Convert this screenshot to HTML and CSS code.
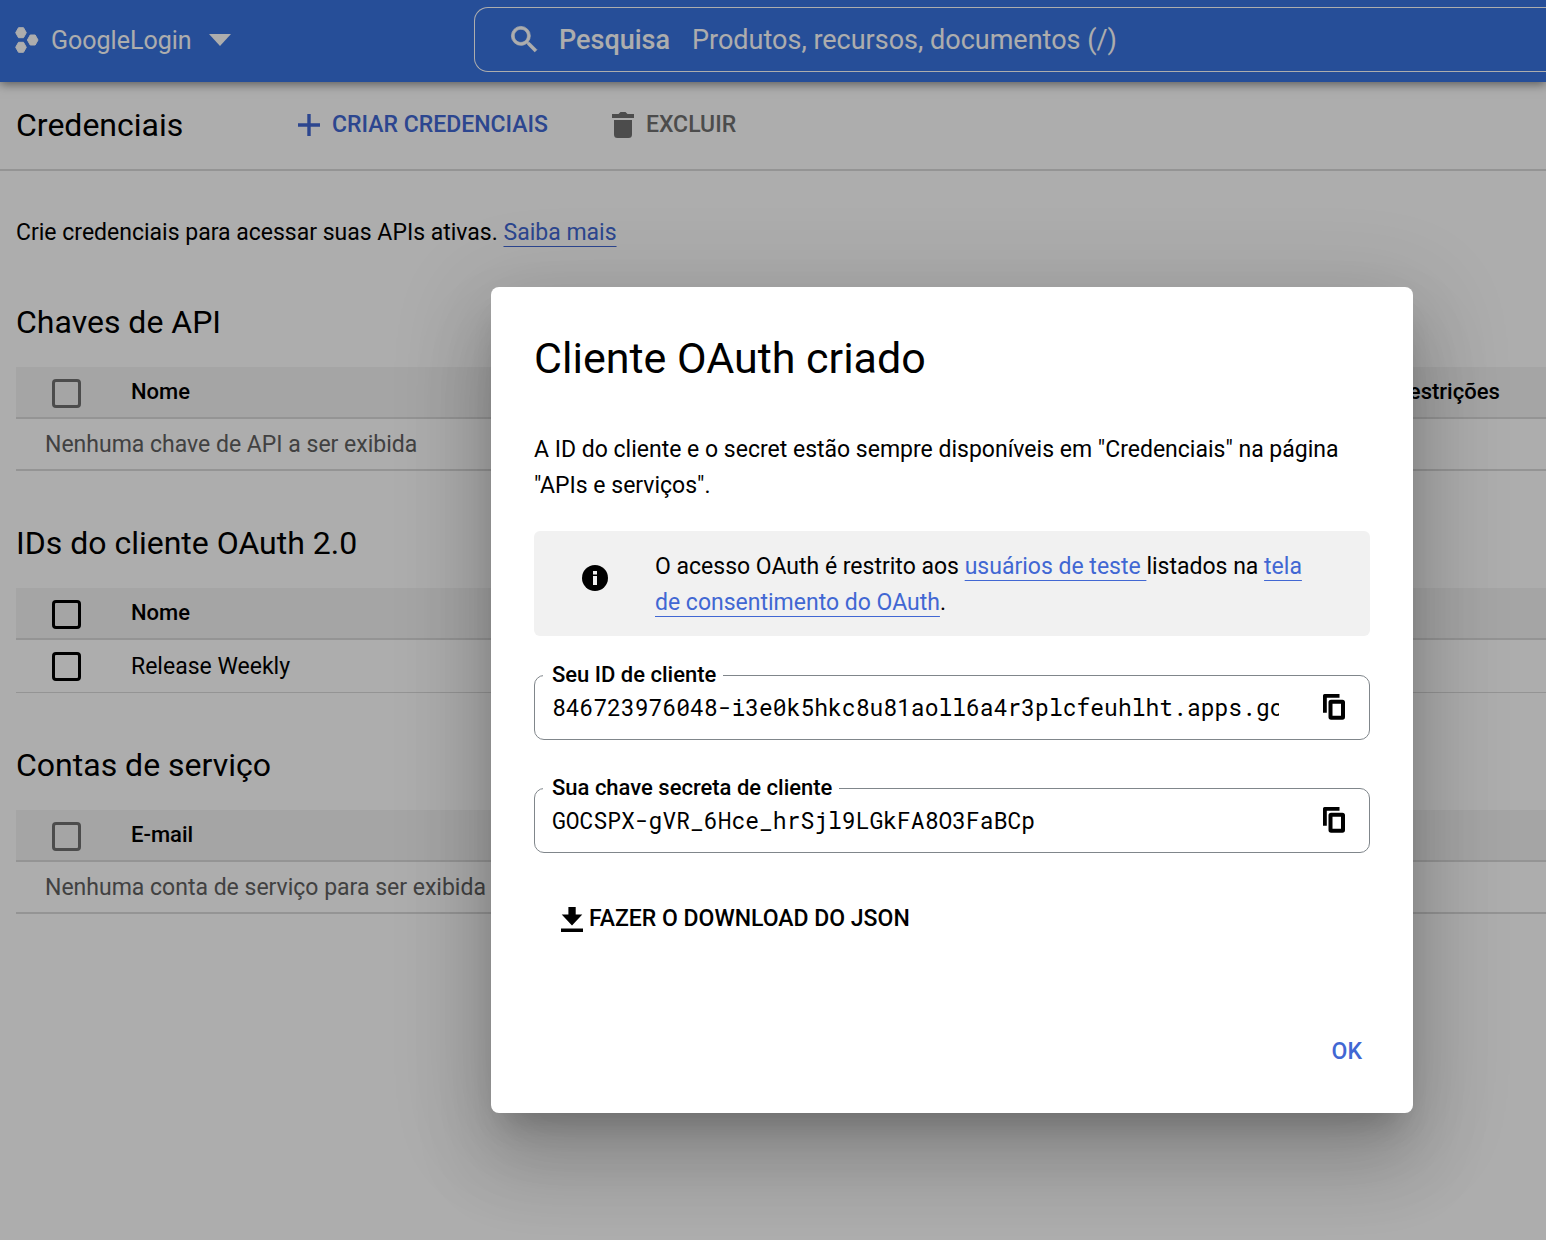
FILE: index.html
```html
<!DOCTYPE html>
<html lang="pt-BR">
<head>
<meta charset="utf-8">
<meta name="viewport" content="width=device-width, initial-scale=1">
<title>Credenciais</title>
<link rel="stylesheet" href="styles.css">
</head>
<body>
<header class="topbar">
  <button class="project" type="button">
    <svg width="24" height="26" viewBox="0 0 24 26" fill="currentColor" stroke="currentColor" stroke-linejoin="round" aria-hidden="true">
      <path d="M3.500 .7h5l2.800 5-2.800 5h-5L.7 5.700zM3.500 15.300h5l2.800 5-2.800 5h-5l-2.800-5zM15.200 8h5l2.800 5-2.800 5h-5l-2.800-5z"/>
    </svg>
    <span class="project-name">GoogleLogin</span>
    <svg width="22" height="12" viewBox="0 0 22 12" fill="currentColor" aria-hidden="true"><path d="M0 0h22L11 12z"/></svg>
  </button>
  <div class="search">
    <svg width="35" height="35" viewBox="0 0 24 24" fill="currentColor" stroke="currentColor" stroke-width=".5" aria-hidden="true">
      <path d="M15.500 14h-.79l-.28-.27A6.470 6.470 0 0 0 16 9.500 6.500 6.500 0 1 0 9.500 16c1.610 0 3.090-.59 4.230-1.570l.27.28v.79l5 4.990L20.490 19l-4.990-5zm-6 0C7.010 14 5 11.990 5 9.500S7.010 5 9.500 5 14 7.010 14 9.500 11.990 14 9.500 14z"/>
    </svg>
    <label class="search-label" for="search">Pesquisa</label>
    <input class="search-input" id="search" type="text" placeholder="Produtos, recursos, documentos (/)">
  </div>
</header>

<div class="toolbar">
  <h1 class="toolbar-title">Credenciais</h1>
  <button class="action action-primary" type="button">
    <svg width="24" height="24" viewBox="0 0 24 24" fill="currentColor" aria-hidden="true"><path d="M10.300 1h3.400v9.300H23v3.400h-9.300V23h-3.400v-9.300H1v-3.400h9.300z"/></svg>
    Criar credenciais
  </button>
  <button class="action action-muted" type="button">
    <svg width="24" height="26" viewBox="0 0 24 26" fill="currentColor" aria-hidden="true"><path d="M1 2h6.500l2-2h5l2 2H23v4H1zM3 8h18v14.500a3.500 3.500 0 0 1-3.500 3.500h-11A3.500 3.500 0 0 1 3 22.500z"/></svg>
    Excluir
  </button>
</div>

<main class="content">
  <p class="intro">Crie credenciais para acessar suas APIs ativas. <a class="link" href="#saiba-mais">Saiba mais</a></p>

  <section class="section">
    <h2 class="section-title">Chaves de API</h2>
    <table class="grid">
      <thead>
        <tr>
          <th class="col-check"><input class="check check-disabled" type="checkbox" aria-label="Selecionar todas as chaves" disabled></th>
          <th>Nome</th>
          <th class="col-restrictions">Restrições</th>
        </tr>
      </thead>
      <tbody>
        <tr><td class="empty" colspan="3">Nenhuma chave de API a ser exibida</td></tr>
      </tbody>
    </table>
  </section>

  <section class="section">
    <h2 class="section-title">IDs do cliente OAuth 2.0</h2>
    <table class="grid">
      <thead>
        <tr>
          <th class="col-check"><input class="check" type="checkbox" aria-label="Selecionar todos os IDs"></th>
          <th>Nome</th>
        </tr>
      </thead>
      <tbody>
        <tr class="row-data">
          <td class="col-check"><input class="check" type="checkbox" aria-label="Selecionar Release Weekly"></td>
          <td>Release Weekly</td>
        </tr>
      </tbody>
    </table>
  </section>

  <section class="section">
    <h2 class="section-title">Contas de serviço</h2>
    <table class="grid">
      <thead>
        <tr>
          <th class="col-check"><input class="check check-disabled" type="checkbox" aria-label="Selecionar todas as contas" disabled></th>
          <th>E-mail</th>
        </tr>
      </thead>
      <tbody>
        <tr><td class="empty" colspan="2">Nenhuma conta de serviço para ser exibida</td></tr>
      </tbody>
    </table>
  </section>
</main>

<div class="overlay">
  <div class="dialog" role="dialog" aria-modal="true" aria-labelledby="dialog-title">
    <h2 class="dialog-title" id="dialog-title">Cliente OAuth criado</h2>
    <p class="dialog-text">A ID do cliente e o secret estão sempre disponíveis em "Credenciais" na página "APIs e serviços".</p>
    <div class="notice">
      <svg class="notice-icon" width="26" height="26" viewBox="0 0 26 26" aria-hidden="true"><circle cx="13" cy="13" r="13"/><path fill="#f1f1f1" d="M11 6h4v3.400h-4zM11 11h4v9h-4z"/></svg>
      <p class="notice-text">O acesso OAuth é restrito aos <a class="link" href="#usuarios">usuários de teste </a>listados na <a class="link" href="#tela">tela de consentimento do OAuth</a>.</p>
    </div>
    <fieldset class="field">
      <legend class="field-legend"><label for="client-id">Seu ID de cliente</label></legend>
      <div class="field-row">
        <input class="field-input" id="client-id" type="text" readonly value="846723976048-i3e0k5hkc8u81aoll6a4r3plcfeuhlht.apps.googleusercontent.com">
        <button class="copy" type="button" aria-label="Copiar ID">
          <svg width="22" height="26" viewBox="0 0 22 26" aria-hidden="true"><path d="M0 1.500A1.500 1.500 0 0 1 1.500 0H16.500v3.800H3.800v15H0z"/><rect x="7.500" y="7.700" width="12.500" height="16" rx=".6" fill="none" stroke="#000" stroke-width="4"/></svg>
        </button>
      </div>
    </fieldset>
    <fieldset class="field">
      <legend class="field-legend"><label for="client-secret">Sua chave secreta de cliente</label></legend>
      <div class="field-row">
        <input class="field-input" id="client-secret" type="text" readonly value="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">
        <button class="copy" type="button" aria-label="Copiar chave secreta">
          <svg width="22" height="26" viewBox="0 0 22 26" aria-hidden="true"><path d="M0 1.500A1.500 1.500 0 0 1 1.500 0H16.500v3.800H3.800v15H0z"/><rect x="7.500" y="7.700" width="12.500" height="16" rx=".6" fill="none" stroke="#000" stroke-width="4"/></svg>
        </button>
      </div>
    </fieldset>
    <button class="download" type="button">
      <svg width="22" height="25" viewBox="0 0 22 25" fill="currentColor" aria-hidden="true"><path d="M7.400 0h7.300v7.500h6.600L11 18.500.7 7.500h6.700zM0 21.500h22V25H0z"/></svg>
      Fazer o download do JSON
    </button>
    <div class="dialog-actions"><button class="ok" type="button">OK</button></div>
  </div>
</div>
</body>
</html>
```
FILE: styles.css
```css
* {
  box-sizing: border-box;
}

body {
  margin: 0;
  min-height: 100vh;
  background: #fff;
  color: #000;
  font: 400 23px/36px Roboto, sans-serif;
  overflow-x: hidden;
}

h1,
h2,
p {
  margin: 0;
  font-weight: 400;
}

button,
input {
  margin: 0;
  padding: 0;
  border: 0;
  background: none;
  color: inherit;
  font: inherit;
}

svg {
  flex: none;
  display: block;
}

.link {
  color: #4167d3;
  text-decoration: underline;
  text-decoration-thickness: 1px;
  text-underline-offset: 6px;
  text-decoration-skip-ink: none;
}

/* Top bar */
.topbar {
  position: relative;
  display: flex;
  align-items: center;
  height: 82px;
  padding: 0 0 3px 15px;
  background: #3873e1;
  color: #fff;
  box-shadow: 0 2px 10px rgba(0, 0, 0, 0.5);
}

.project {
  display: flex;
  flex: 0 0 459px;
  align-items: center;
  font-size: 25px;
}

.project-name {
  margin: 3px 17px 0 12px;
}

.search {
  display: flex;
  flex: 1;
  align-items: center;
  height: 65px;
  padding-left: 32px;
  border: 1px solid #fff;
  border-right: 0;
  border-radius: 14px 0 0 14px;
  font-size: 27px;
}

.search-label {
  margin: 0 22px 0 17px;
  font-weight: 500;
}

.search-input {
  flex: 1;
  min-width: 0;
}

.search-input::placeholder {
  color: inherit;
  opacity: 1;
}

/* Toolbar */
.toolbar {
  display: flex;
  align-items: center;
  height: 89px;
  padding: 0 16px 1px;
  border-bottom: 2px solid #dadada;
}

.toolbar-title {
  flex: 0 0 281px;
  font-size: 32px;
}

.action {
  display: flex;
  align-items: center;
  gap: 11px;
  margin-right: 63px;
  font-weight: 500;
  text-transform: uppercase;
}

.action-primary {
  color: #4167d3;
}

.action-muted {
  color: #717171;
}

/* Credentials lists */
.content {
  padding: 44px 0 0 16px;
}

.section {
  margin-top: 49px;
}

.section + .section {
  margin-top: 50px;
}

.section-title {
  margin-bottom: 23px;
  font-size: 32px;
  line-height: 44px;
}

.grid {
  width: 100%;
  border-spacing: 0;
  text-align: left;
}

.grid th,
.grid td {
  height: 52px;
  padding: 0;
  border-bottom: 2px solid #dadada;
}

.grid td {
  padding-top: 1px;
}

.grid th {
  background: #f3f3f3;
  font-size: 22px;
  font-weight: 500;
}

.grid .row-data td {
  height: 53px;
  border-bottom-width: 1px;
}

.grid .empty {
  padding-left: 29px;
  color: #616161;
}

.grid .col-check {
  width: 115px;
  padding-left: 36px;
}

.grid th.col-check {
  padding-top: 3px;
}

.grid .col-restrictions {
  width: 151px;
}

.check {
  appearance: none;
  display: block;
  width: 29px;
  height: 29px;
  border: 3px solid #000;
  border-radius: 4px;
}

.check-disabled {
  border-color: #717171;
}

/* Dialog */
.overlay {
  position: absolute;
  inset: 0;
  padding: 287px 133px 0 491px;
  background: rgba(0, 0, 0, 0.32);
}

.dialog {
  padding: 44px 43px 43px;
  border-radius: 8px;
  background: #fff;
  box-shadow: 0 22px 30px -14px rgba(0, 0, 0, 0.2),
    0 48px 76px 6px rgba(0, 0, 0, 0.14),
    0 18px 92px 16px rgba(0, 0, 0, 0.12);
}

.dialog-title {
  margin-bottom: 47px;
  font-size: 43px;
  line-height: 54px;
}

.dialog-text {
  margin-bottom: 27px;
}

.notice {
  display: flex;
  margin-bottom: 26px;
  padding: 18px 48px 15px;
  border-radius: 6px;
  background: #f1f1f1;
}

.notice-icon {
  margin: 16px 47px 0 0;
}

.field {
  min-width: 0;
  margin: 0 0 35px;
  padding: 0 18px 13px 8px;
  border: 1px solid #80868b;
  border-radius: 10px;
}

.field-legend {
  padding: 0 7px 0 9px;
  font-size: 22px;
  font-weight: 500;
  line-height: 26px;
}

.field-row {
  display: flex;
  align-items: center;
  justify-content: space-between;
  padding-left: 9px;
}

.field-input {
  flex: 1;
  min-width: 0;
  height: 38px;
  font-family: "Roboto Mono", "DejaVu Sans Mono", monospace;
}

.copy {
  display: flex;
  justify-content: center;
  width: 34px;
  margin-left: 38px;
}

.download {
  display: flex;
  align-items: center;
  gap: 6px;
  margin: 48px 0 97px 27px;
  font-weight: 500;
  text-transform: uppercase;
}

.dialog-actions {
  display: flex;
  justify-content: flex-end;
  padding-right: 8px;
}

.ok {
  color: #4167d3;
  font-weight: 500;
}
```
